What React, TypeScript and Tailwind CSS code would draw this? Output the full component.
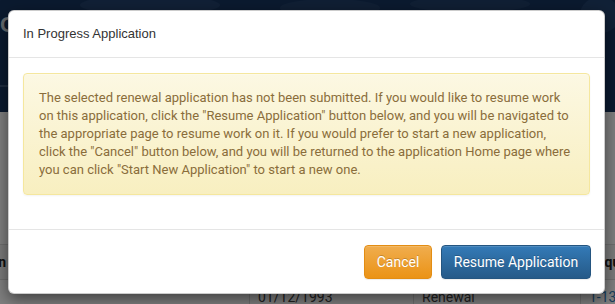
const InProgressModal = () => {
     return (
          <div className="absolute left-[8px] top-[10px] w-[597px] h-[284px] bg-white rounded-[6px] border border-black/20 shadow-[0_5px_15px_rgba(0,0,0,0.5)] flex flex-col overflow-hidden">
               {/* Header */}
               <div className="h-[47px] shrink-0 border-b border-[#e5e5e5] px-[14px] flex items-center">
                    <h4 className="font-['Liberation_Sans',Arial,sans-serif] text-[13px] text-[#333]">In Progress Application</h4>
               </div>

               {/* Body */}
               <div className="p-[14px] pt-[15px] shrink-0">
                    <div className="h-[122px] rounded-[4px] border border-[#f5e79e] bg-[linear-gradient(to_bottom,#fcf8e3,#f8efc0)] shadow-[inset_0_1px_0_rgba(255,255,255,0.25),0_1px_2px_rgba(0,0,0,0.05)] px-[15px] py-[15px] text-[13px] leading-[18px] text-[#8a6d3b]">
                         The selected renewal application has not been submitted. If you would like to resume work
                         on this application, click the "Resume Application" button below, and you will be navigated to
                         the appropriate page to resume work on it. If you would prefer to start a new application,
                         click the "Cancel" button below, and you will be returned to the application Home page where
                         you can click "Start New Application" to start a new one.
                    </div>
               </div>

               {/* Footer */}
               <div className="mt-auto h-[64px] shrink-0 border-t border-[#e5e5e5] flex items-start justify-end gap-[9px] pt-[15px] pr-[13px]">
                    <button className="h-[34px] w-[68px] rounded-[4px] border border-[#e38d13] bg-[linear-gradient(to_bottom,#f0ad4e,#eb9316)] text-white text-[14px] [text-shadow:0_-1px_0_rgba(0,0,0,0.2)] shadow-[inset_0_1px_0_rgba(255,255,255,0.15),0_1px_1px_rgba(0,0,0,0.075)]">
                         Cancel
                    </button>
                    <button className="h-[34px] w-[150px] rounded-[4px] border border-[#245580] bg-[linear-gradient(to_bottom,#337ab7,#265a88)] text-white text-[14px] [text-shadow:0_-1px_0_rgba(0,0,0,0.2)] shadow-[inset_0_1px_0_rgba(255,255,255,0.15),0_1px_1px_rgba(0,0,0,0.075)]">
                         Resume Application
                    </button>
               </div>
          </div>
     )
}

const App = () => {
     return (
          <div className="relative w-[615px] h-[304px] overflow-hidden font-['Roboto',sans-serif]">
               {/* --- PAGE BEHIND --- */}
               <div className="flex flex-col h-full">
                    <div className="relative h-[112px] shrink-0 bg-[#15325c] overflow-hidden">
                         <svg width="615" height="112" viewBox="0 0 615 112" className="block">
                              <rect width="615" height="112" fill="#17355f" />
                              <ellipse cx="150" cy="5" rx="70" ry="10" fill="#2a4a74" opacity="0.6" />
                              <ellipse cx="330" cy="8" rx="50" ry="9" fill="#2a4a74" opacity="0.5" />
                              <ellipse cx="470" cy="4" rx="60" ry="8" fill="#284670" opacity="0.6" />
                              <ellipse cx="600" cy="15" rx="20" ry="18" fill="#2f5080" opacity="0.5" />
                              <path d="M0 86 H20" stroke="#4a6488" strokeWidth="1.5" />
                         </svg>
                         <span className="absolute left-0 top-[8px] text-[22px] font-bold text-[#cfd6df] font-['Liberation_Sans',Arial,sans-serif]">G</span>
                    </div>
                    <div className="flex-1 bg-white pt-[132px] text-[14px]">
                         <div className="ml-[-30px] flex h-[36px] border-y border-[#ddd] bg-[#f5f5f5] font-bold text-[#222]">
                              <div className="w-[279px] shrink-0 px-2 flex items-center">Plan</div>
                              <div className="w-[164px] shrink-0 px-2 flex items-center">Date</div>
                              <div className="w-[167px] shrink-0 px-2 flex items-center">Type</div>
                              <div className="flex-1 min-w-0 pl-[8px] flex items-center whitespace-nowrap">Request</div>
                         </div>
                         <div className="ml-[-30px] flex h-[36px] text-[#444]">
                              <div className="w-[279px] shrink-0 px-2" />
                              <div className="w-[164px] shrink-0 px-2 pt-[7px] border-l border-[#ddd]">01/12/1993</div>
                              <div className="w-[167px] shrink-0 px-2 pt-[7px] border-l border-[#ddd]">Renewal</div>
                              <div className="flex-1 min-w-0 px-2 pt-[7px] border-l border-[#ddd] text-[#337ab7] whitespace-nowrap">1-1360</div>
                         </div>
                    </div>
               </div>

               {/* --- BACKDROP --- */}
               <div className="absolute inset-0 bg-black/50" />

               {/* --- MODAL --- */}
               <InProgressModal />
          </div>
     )
}

export default App
